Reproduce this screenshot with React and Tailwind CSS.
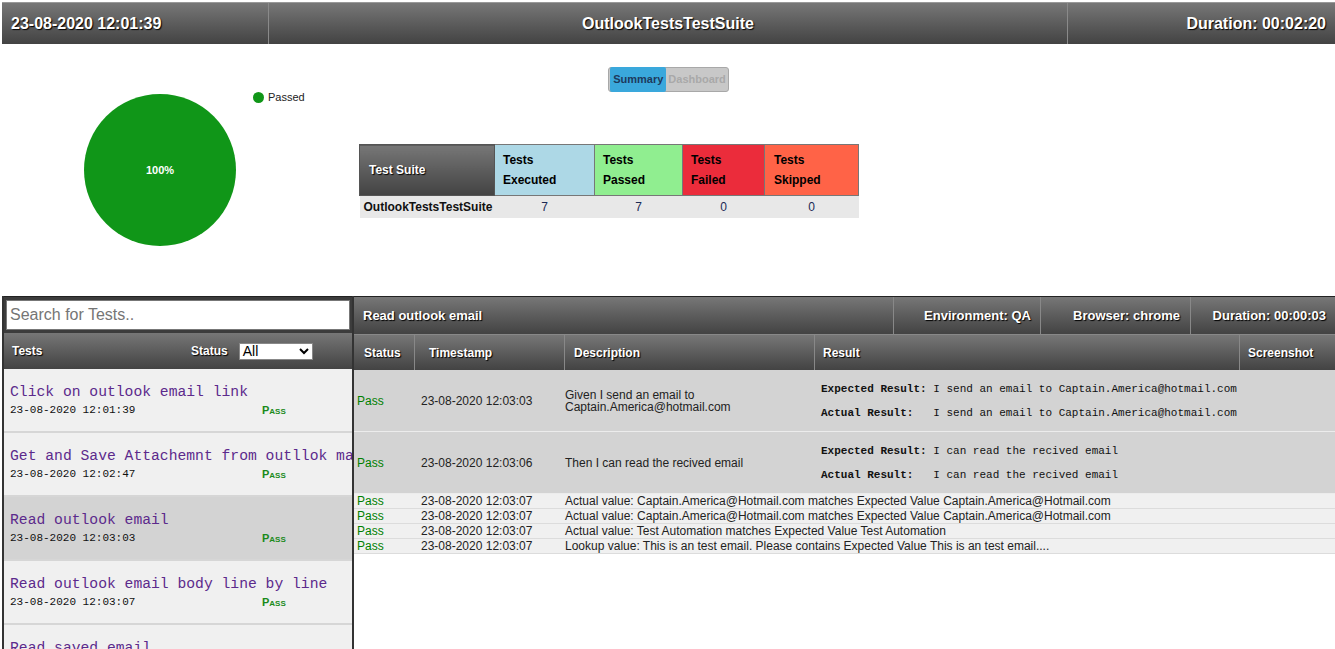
import React from 'react';

const bar = 'bg-linear-to-b from-[#777777] to-[#434343] text-white font-bold [text-shadow:1px_1px_1px_#000]';

const tests = [
  { name: 'Click on outlook email link', time: '23-08-2020 12:01:39' },
  { name: 'Get and Save Attachemnt from outllok mail', time: '23-08-2020 12:02:47' },
  { name: 'Read outlook email', time: '23-08-2020 12:03:03', active: true },
  { name: 'Read outlook email body line by line', time: '23-08-2020 12:03:07' },
  { name: 'Read saved email', time: '23-08-2020 12:03:10' },
];

const bigSteps = [
  {
    time: '23-08-2020 12:03:03',
    desc: ['Given I send an email to', 'Captain.America@hotmail.com'],
    expected: 'I send an email to Captain.America@hotmail.com',
  },
  {
    time: '23-08-2020 12:03:06',
    desc: ['Then I can read the recived email'],
    expected: 'I can read the recived email',
  },
];

const smallSteps = [
  'Actual value: Captain.America@Hotmail.com matches Expected Value Captain.America@Hotmail.com',
  'Actual value: Captain.America@Hotmail.com matches Expected Value Captain.America@Hotmail.com',
  'Actual value: Test Automation matches Expected Value Test Automation',
  'Lookup value: This is an test email. Please contains Expected Value This is an test email....',
];

const cols = 'grid grid-cols-[60px_150px_250px_425px_1fr]';

const App = () => {
  return (
    <main className="min-h-screen bg-white pl-[2px] pt-[2px] font-['Liberation_Sans',Arial,sans-serif] overflow-hidden">
      {/* Top bar */}
      <header className={`flex h-[42px] border-t border-[#999] ${bar} text-[16px]`}>
        <div className="w-[267px] flex items-center pl-[9px] border-r border-[#8a8a8a]">23-08-2020 12:01:39</div>
        <div className="flex-1 flex items-center justify-center border-r border-[#8a8a8a]">OutlookTestsTestSuite</div>
        <div className="w-[267px] flex items-center justify-end pr-[9px]">Duration: 00:02:20</div>
      </header>

      {/* Summary section */}
      <section className="h-[252px]">
        <div className="flex justify-center pt-[23px]">
          <div className="flex h-[25px] items-center rounded-[3px] border border-[#a8a8a8] bg-[#c8c8c8] p-[1px] text-[11px] font-bold">
            <span className="rounded-[2px] bg-[#3aa8dc] px-[3px] py-[4px] text-[#1d3a5c]">Summary</span>
            <span className="pl-[2px] pr-[1px] text-[#a9a9a9]">Dashboard</span>
          </div>
        </div>
        <div className="flex">
          <div className="relative w-[357px]">
            <svg width="154" height="154" viewBox="0 0 154 154" className="ml-[81px] mt-[1px]">
              <circle cx="77" cy="77" r="76" fill="#109618" />
              <text x="77" y="81" textAnchor="middle" fill="#fff" fontSize="11" fontWeight="bold" fontFamily="Liberation Sans, Arial, sans-serif">100%</text>
            </svg>
            <div className="absolute left-[251px] top-[-3px] flex items-center gap-[4px] text-[11px] text-[#222]">
              <span className="inline-block h-[11px] w-[11px] rounded-full bg-[#109618]" />
              Passed
            </div>
          </div>
          <table className="mt-[52px] h-[73px] border-collapse text-[12px] font-bold">
            <thead>
              <tr className="h-[51px]">
                <th className={`w-[135px] border border-[#555] pl-[9px] text-left ${bar} text-[12px]`}>Test Suite</th>
                <th className="w-[100px] border border-[#777] bg-[#add8e6] pl-[8px] text-left leading-[20px] text-black">Tests<br />Executed</th>
                <th className="w-[88px] border border-[#777] bg-[#90ee90] pl-[8px] text-left leading-[20px] text-black">Tests<br />Passed</th>
                <th className="w-[82px] border border-[#777] bg-[#eb2c3b] pl-[8px] text-left leading-[20px] text-black">Tests<br />Failed</th>
                <th className="w-[94px] border border-[#777] bg-[#ff6347] pl-[9px] text-left leading-[20px] text-black">Tests<br />Skipped</th>
              </tr>
            </thead>
            <tbody>
              <tr className="h-[22px] bg-[#e8e8e8]">
                <td className="pl-[4px] text-[#111]">OutlookTestsTestSuite</td>
                <td className="text-center font-normal text-[#1b2a55]">7</td>
                <td className="text-center font-normal text-[#1b2a55]">7</td>
                <td className="text-center font-normal text-[#1b2a55]">0</td>
                <td className="text-center font-normal text-[#1b2a55]">0</td>
              </tr>
            </tbody>
          </table>
        </div>
      </section>

      {/* Details section */}
      <section className="flex h-[353px]">
        {/* Test list */}
        <aside className="w-[352px] shrink-0 border-x-2 border-[#333] bg-[#f0f0f0] overflow-hidden">
          <div className="bg-[#3c3c3c] px-[2px] pt-[3px] pb-[3px] border-t border-[#222]">
            <input
              placeholder="Search for Tests.."
              className="block h-[30px] w-full border border-[#777] bg-white px-[3px] text-[16px] text-[#333] placeholder:text-[#757575] outline-none"
            />
          </div>
          <div className={`flex h-[36px] items-center ${bar} text-[12px]`}>
            <span className="w-[187px] pl-[8px]">Tests</span>
            <span>Status</span>
            <div className="ml-[11px] flex h-[17px] w-[74px] items-center justify-between border border-[#888] bg-white px-[3px] text-[14px] font-normal text-black [text-shadow:none]">
              All
              <svg width="10" height="7" viewBox="0 0 10 7"><path d="M1 1l4 4 4-4" stroke="#000" strokeWidth="2" fill="none" /></svg>
            </div>
          </div>
          {tests.map((t) => (
            <div
              key={t.name}
              className={`h-[64px] border-b-2 border-[#d6d6d6] px-[6px] pt-[13px] ${t.active ? 'bg-[#d3d3d3]' : 'bg-[#f0f0f0]'}`}
            >
              <div className="whitespace-nowrap font-['Liberation_Mono',monospace] text-[14.7px] leading-[20px] text-[#5c2a8c]">{t.name}</div>
              <div className="flex items-center leading-[17px]">
                <span className="w-[252px] font-['Liberation_Mono',monospace] text-[11px] text-[#111]">{t.time}</span>
                <span className="text-[11px] font-bold text-[#1a8a1a] [font-variant:small-caps]">Pass</span>
              </div>
            </div>
          ))}
        </aside>

        {/* Test detail */}
        <div className="flex-1 border-t border-[#222] bg-white">
          <div className={`flex h-[37px] items-center ${bar} text-[13px]`}>
            <div className="flex-1 pl-[9px]">Read outlook email</div>
            <div className="flex h-full w-[147px] items-center justify-end border-l border-[#888] pr-[9px]">Environment: QA</div>
            <div className="flex h-full w-[150px] items-center justify-end border-l border-[#888] pr-[10px]">Browser: chrome</div>
            <div className="flex h-full w-[145px] items-center justify-end border-l border-[#888] pr-[9px]">Duration: 00:00:03</div>
          </div>
          <div className={`${cols} h-[36px] items-center ${bar} text-[12px] border-t border-[#888]`}>
            <div className="flex h-full items-center pl-[10px]">Status</div>
            <div className="flex h-full items-center border-l border-[#888] pl-[14px]">Timestamp</div>
            <div className="flex h-full items-center border-l border-[#888] pl-[9px]">Description</div>
            <div className="flex h-full items-center border-l border-[#888] pl-[8px]">Result</div>
            <div className="flex h-full items-center border-l border-[#888] pl-[8px]">Screenshot</div>
          </div>

          {bigSteps.map((s) => (
            <div key={s.time} className={`${cols} h-[62px] items-center border-b border-[#ececec] bg-[#d3d3d3] text-[12px] text-[#222]`}>
              <div className="pl-[3px] text-[#008000]">Pass</div>
              <div className="pl-[7px]">{s.time}</div>
              <div className="pl-[1px] leading-[12px]">
                {s.desc.map((d) => (
                  <div key={d}>{d}</div>
                ))}
              </div>
              <div className="flex flex-col gap-[10px] pl-[7px] font-['Liberation_Mono',monospace] text-[11px] leading-[14px] text-[#111] whitespace-pre">
                <div><b>Expected Result:</b> {s.expected}</div>
                <div><b>Actual Result:</b>   {s.expected}</div>
              </div>
              <div />
            </div>
          ))}

          {smallSteps.map((d, i) => (
            <div key={i} className={`${cols} h-[15px] items-center border-b border-[#dcdcdc] bg-[#f0f0f0] text-[12px] leading-[14px] text-[#222]`}>
              <div className="pl-[3px] text-[#008000]">Pass</div>
              <div className="pl-[7px]">23-08-2020 12:03:07</div>
              <div className="col-span-3 whitespace-nowrap pl-[1px]">{d}</div>
            </div>
          ))}
        </div>
      </section>
    </main>
  );
};

export default App;
